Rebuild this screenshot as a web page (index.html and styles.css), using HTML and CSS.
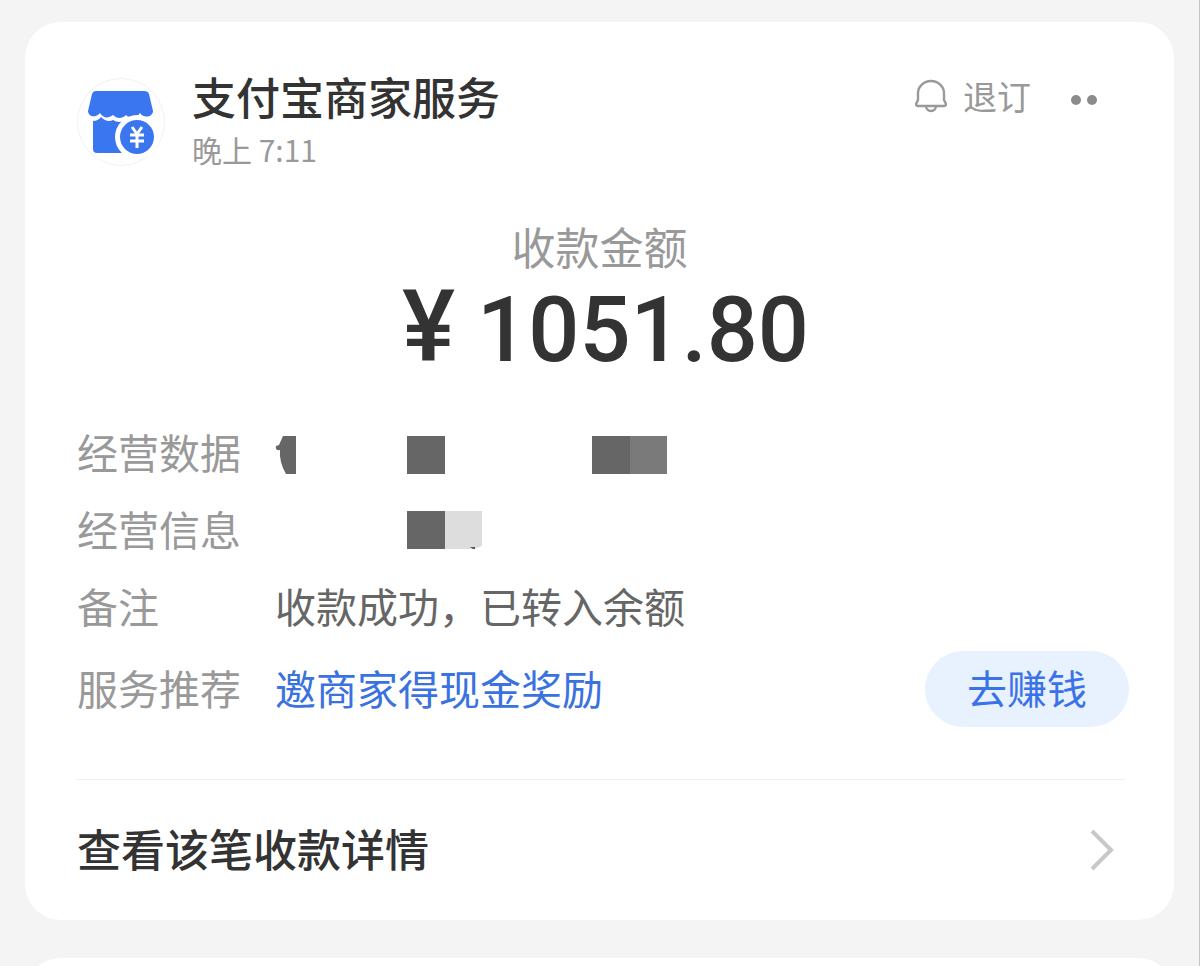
FILE: index.html
```html
<!DOCTYPE html>
<html lang="zh-CN">
<head>
  <meta charset="UTF-8">
  <meta name="viewport" content="width=device-width, initial-scale=1.0">
  <title>支付宝商家服务</title>
  <link rel="stylesheet" href="styles.css">
</head>
<body>
  <main class="card">
    <header class="header">
      <svg class="avatar" viewBox="0 0 88 88" aria-hidden="true">
        <circle cx="44" cy="44" r="43.5" fill="#fff" stroke="#f1f1f1"/>
        <path fill="#3a76f0" d="M19 13h48q4 0 5 3l4 17c0 6-9 8-13 2-4 6-10 6-14 2-4 4-9 4-13 0-5 4-10 3-13-2-5 6-12 3-12-2l4-17q1-3 4-3z"/>
        <path fill="#3a76f0" d="M16 43q5 0 8-4 6 6 12 3 6 4 13 0 5 3 9 0C42 44 35 61 46 75H20q-4 0-4-4z"/>
        <circle cx="60" cy="59" r="22" fill="#fff"/>
        <circle cx="60" cy="59" r="17" fill="#3a76f0"/>
        <path fill="none" stroke="#fff" stroke-width="3" d="M55 49l5 7 5-7M60 56v14M53 57h14M53 63h14"/>
      </svg>
      <div class="account">
        <h1 class="name">支付宝商家服务</h1>
        <p class="time">晚上 7:11</p>
      </div>
      <button class="unsubscribe" type="button">
        <svg class="bell" viewBox="0 0 32 34" fill="none" stroke="#999" stroke-width="2.4" stroke-linejoin="round" aria-hidden="true">
          <path d="M3 21V14a13 12 0 0 1 26 0v7l2 4q0 2-2 2H3q-2 0-2-2z"/>
          <path d="M11 27a5 5 0 0 0 10 0"/>
        </svg>
        退订
      </button>
      <button class="more" type="button" aria-label="更多">
        <span class="dot"></span>
        <span class="dot"></span>
      </button>
    </header>

    <section class="summary">
      <p class="summary-label">收款金额</p>
      <p class="amount"><span class="currency">¥</span>1051.80</p>
    </section>

    <dl class="details">
      <div class="row">
        <dt>经营数据</dt>
        <dd>
          <svg class="mask" viewBox="0 0 392 46" width="392" height="46" aria-hidden="true">
            <path fill="#666" d="M8 8h13v38H11Q4 34 5 22q-5 1-4-4l3-1z"/>
            <path fill="#666" d="M132 8h38v38h-38zM317 8h38v38h-38z"/>
            <path fill="#7a7a7a" d="M355 8h37v38h-37z"/>
          </svg>
        </dd>
      </div>
      <div class="row">
        <dt>经营信息</dt>
        <dd>
          <svg class="mask" viewBox="0 0 392 42" width="392" height="42" aria-hidden="true">
            <path fill="#666" d="M132 4h38v38h-38z"/>
            <path fill="#ddd" d="M170 4h37v35l-8 3h-29z"/>
            <path fill="#555" d="M195 40h5v2h-2z"/>
          </svg>
        </dd>
      </div>
      <div class="row">
        <dt>备注</dt>
        <dd>收款成功，已转入余额</dd>
      </div>
      <div class="row row-promo">
        <dt>服务推荐</dt>
        <dd><a class="promo-link" href="#">邀商家得现金奖励</a></dd>
        <dd class="row-action"><button class="earn" type="button">去赚钱</button></dd>
      </div>
    </dl>

    <a class="detail-link" href="#">
      查看该笔收款详情
      <svg class="arrow" viewBox="0 0 24 42" fill="none" stroke="#c8c8c8" stroke-width="4" aria-hidden="true">
        <path d="M2 2l19 19L2 40"/>
      </svg>
    </a>
  </main>
  <div class="card card-next"></div>
</body>
</html>
```

FILE: styles.css
```css
* {
  box-sizing: border-box;
}
body {
  height: 100vh;
  margin: 0;
  padding: 22px 25px 0;
  overflow: hidden;
  background-color: #f4f4f4;
  border-right: 1px solid #c4c4c4;
  color: #333;
  font-family: "Noto Sans CJK SC", sans-serif;
}
h1,
p,
dl,
dd {
  margin: 0;
}
button {
  padding: 0;
  border: none;
  background: none;
  font-family: inherit;
  cursor: pointer;
}
a {
  text-decoration: none;
}
.card {
  padding: 52px 45px 0 52px;
  background-color: #fff;
  border-radius: 36px;
}
/* 下一张卡片，只露出顶部 */
.card-next {
  min-height: 72px;
  margin-top: 38px;
  padding: 0;
}

/* 头部 */
.header {
  display: flex;
  align-items: flex-start;
}
.avatar {
  width: 88px;
  height: 88px;
  margin-top: 4px;
}
.account {
  flex: 1;
  margin-left: 27px;
}
.name {
  font-size: 44px;
  font-weight: 500;
  line-height: 44px;
}
.time {
  margin-top: 10px;
  color: #999;
  font-size: 30px;
  line-height: 42px;
}
.unsubscribe {
  display: flex;
  align-items: center;
  gap: 16px;
  color: #999;
  font-size: 34px;
  line-height: 44px;
}
.bell {
  width: 32px;
  height: 34px;
}
.more {
  display: flex;
  gap: 6px;
  margin: 21px 32px 0 40px;
}
.dot {
  width: 10px;
  height: 10px;
  border-radius: 50%;
  background-color: #8c8c8c;
}

/* 金额 */
.summary {
  margin: 48px 7px 0 0;
  text-align: center;
}
.summary-label {
  color: #999;
  font-size: 44px;
  line-height: 56px;
}
.amount {
  padding-left: 12px;
  font-family: Roboto, "Noto Sans CJK SC", sans-serif;
  font-size: 90px;
  font-weight: 500;
  line-height: 106px;
}
.currency {
  margin-right: 22px;
  font-size: 100px;
}

/* 明细 */
.details {
  margin-top: 30px;
  font-size: 41px;
}
.row {
  display: flex;
  align-items: center;
  min-height: 77px;
}
.row dt,
.row dd {
  padding-bottom: 4px;
  line-height: 72px;
}
.row dt {
  width: 198px;
  color: #999;
}
.row dd {
  color: #666;
}
.row-promo {
  margin-top: 5px;
}
.row .row-action {
  margin-left: auto;
  padding: 0;
}
.mask {
  display: block;
}
.promo-link {
  color: #3a72e0;
}
.earn {
  display: block;
  padding: 0 42px 4px;
  border-radius: 38px;
  background-color: #e8f1fe;
  color: #3a72e8;
  font-size: 40px;
  line-height: 72px;
}

/* 底部入口 */
.detail-link {
  display: flex;
  align-items: center;
  justify-content: space-between;
  margin: 52px 4px 0 0;
  padding: 0 11px 4px 0;
  border-top: 1px solid #f0f0f0;
  color: #333;
  font-size: 44px;
  font-weight: 500;
  line-height: 136px;
}
.arrow {
  width: 24px;
  height: 42px;
  margin-top: 4px;
}
```
